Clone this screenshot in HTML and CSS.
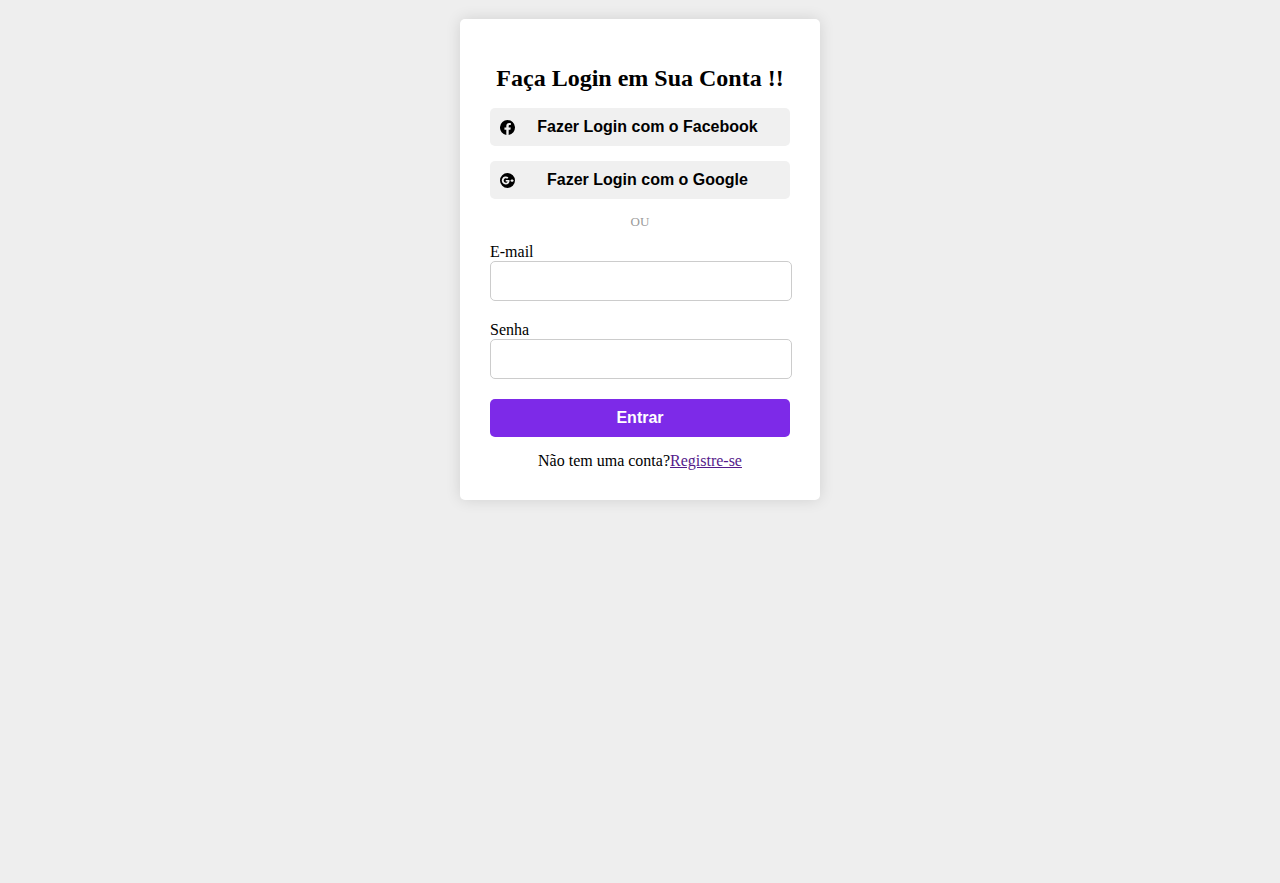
FILE: index.html
```html
<!DOCTYPE html>
<html lang="pt-BR">
<head>
<meta charset="utf-8">
<meta name="viewport" content="width=device-width, initial-scale=1">
<title>Login</title>
<link rel="stylesheet" href="styles.css">
</head>
<body>
<main class="card">
  <h1 class="title">Faça Login em Sua Conta !!</h1>
  <div class="social">
    <button type="button" class="button social-button">
      <svg class="icon" viewBox="0 0 24 24" aria-hidden="true"><path d="M12 0a12 12 0 0 0-1.9 23.85v-8.4H7.1V12h3V9.36c0-3 1.8-4.67 4.55-4.67 1.3 0 2.7.24 2.7.24v2.95h-1.5c-1.5 0-1.97.93-1.97 1.88V12h3.35l-.53 3.45h-2.82v8.4A12 12 0 0 0 12 0z"/></svg>
      <span class="social-text">Fazer Login com o Facebook</span>
    </button>
    <button type="button" class="button social-button">
      <svg class="icon" viewBox="0 0 24 24" aria-hidden="true"><path fill-rule="evenodd" d="M12 0a12 12 0 1 0 0 24 12 12 0 0 0 0-24zM9.2 18.2a6.3 6.3 0 1 1 4.3-10.9l-1.9 1.85A3.55 3.55 0 1 0 9.2 15.5c1.6 0 2.6-.8 2.95-2H9.2V11h5.9c.1.4.15.8.15 1.2 0 3.6-2.4 6-6.05 6zM18.3 9.8h1.9v1.4h1.4v1.8h-1.4v1.4h-1.9V13h-1.4v-1.8h1.4z"/></svg>
      <span class="social-text">Fazer Login com o Google</span>
    </button>
  </div>
  <p class="divider">OU</p>
  <form class="form">
    <div class="field">
      <label for="email">E-mail</label>
      <input class="input" type="email" id="email" name="email">
    </div>
    <div class="field">
      <label for="password">Senha</label>
      <input class="input" type="password" id="password" name="password">
    </div>
    <button type="submit" class="button submit">Entrar</button>
  </form>
  <p class="register">Não tem uma conta?<a class="link" href="#">Registre-se</a></p>
</main>
</body>
</html>
```
FILE: styles.css
```css
body {
  margin: 0;
  padding: 19px;
  background: #eee;
  color: #000;
  font-family: "Liberation Serif", "Times New Roman", serif;
  font-size: 16px;
  line-height: 18px;
}

.card {
  max-width: 300px;
  margin: 0 auto;
  padding: 45px 30px 30px;
  border-radius: 5px;
  background: #fff;
  box-shadow: 0 0 15px rgba(0, 0, 0, 0.12);
}

.title {
  margin: 0 0 16px;
  font-size: 24px;
  line-height: 28px;
  text-align: center;
}

.social {
  display: flex;
  flex-direction: column;
  gap: 15px;
}

.button {
  display: flex;
  align-items: center;
  justify-content: center;
  width: 100%;
  padding: 10px;
  border: 0;
  border-radius: 5px;
  font: bold 16px/18px "Liberation Sans", Arial, sans-serif;
  cursor: pointer;
}

.social-button {
  background: #f0f0f0;
  color: #000;
}

.icon {
  flex: none;
  width: 15px;
  height: 15px;
}

.social-text {
  flex: 1;
}

.divider {
  margin: 15px 0 14px;
  color: #999;
  font-size: 13px;
  line-height: 15px;
  text-align: center;
}

.form {
  display: flex;
  flex-direction: column;
  gap: 20px;
}

.field {
  display: flex;
  flex-direction: column;
  align-items: flex-start;
}

.input {
  box-sizing: content-box;
  width: 100%;
  height: 38px;
  padding: 0;
  border: 1px solid #ccc;
  border-radius: 5px;
  background: #fff;
  font-size: 16px;
}

.submit {
  background: #7d2ae8;
  color: #fff;
}

.register {
  margin: 15px 0 0;
  text-align: center;
}

.link {
  color: #551a8b;
}
```
